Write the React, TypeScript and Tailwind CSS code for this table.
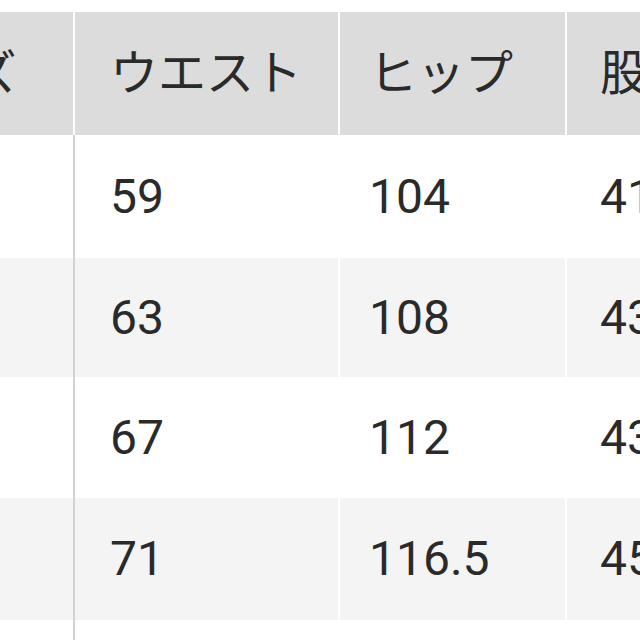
import React from "react";

const font = { fontFamily: '"Roboto", "Noto Sans CJK JP", sans-serif' };

const header = ["サイズ", "ウエスト", "ヒップ", "股下"];
const rows: { cells: string[]; h: string; bg: string }[] = [
  { cells: ["S", "59", "104", "41"], h: "h-[123px]", bg: "bg-white" },
  { cells: ["M", "63", "108", "43"], h: "h-[119px]", bg: "bg-[#f4f4f4]" },
  { cells: ["L", "67", "112", "43"], h: "h-[121px]", bg: "bg-white" },
  { cells: ["XL", "71", "116.5", "45"], h: "h-[122px]", bg: "bg-[#f4f4f4]" },
];

const widths = ["w-[233px]", "w-[265px]", "w-[227px]", "w-[200px]"];
const pads = ["pl-[32px]", "pl-[35px]", "pl-[29px]", "pl-[33px]"];

export default function App() {
  return (
    <div className="w-[640px] h-[640px] overflow-hidden bg-white text-[#2a2a2a]" style={font}>
      <div className="ml-[-158px] pt-[12px] w-[925px]">
        <div className="flex h-[123px] bg-[#dcdcdc]">
          {header.map((t, i) => (
            <div
              key={i}
              className={`${widths[i]} ${pads[i]} shrink-0 flex items-center text-[48px] font-normal leading-none whitespace-nowrap ${i < 3 ? "border-r-2 border-white" : ""}`}
            >
              {t}
            </div>
          ))}
        </div>
        {rows.map((r, ri) => (
          <div key={ri} className={`flex ${r.h} ${r.bg}`}>
            {r.cells.map((c, i) => (
              <div
                key={i}
                className={`${widths[i]} ${pads[i]} shrink-0 flex items-center text-[48px] font-normal leading-none whitespace-nowrap ${i === 0 ? "border-r-2 border-[#d2d2d2]" : i < 3 ? "border-r-2 border-white" : ""}`}
              >
                {i === 0 ? "" : c}
              </div>
            ))}
          </div>
        ))}
        <div className="flex h-[40px] bg-white">
          <div className="w-[233px] shrink-0 border-r-2 border-[#d2d2d2]" />
        </div>
      </div>
    </div>
  );
}
